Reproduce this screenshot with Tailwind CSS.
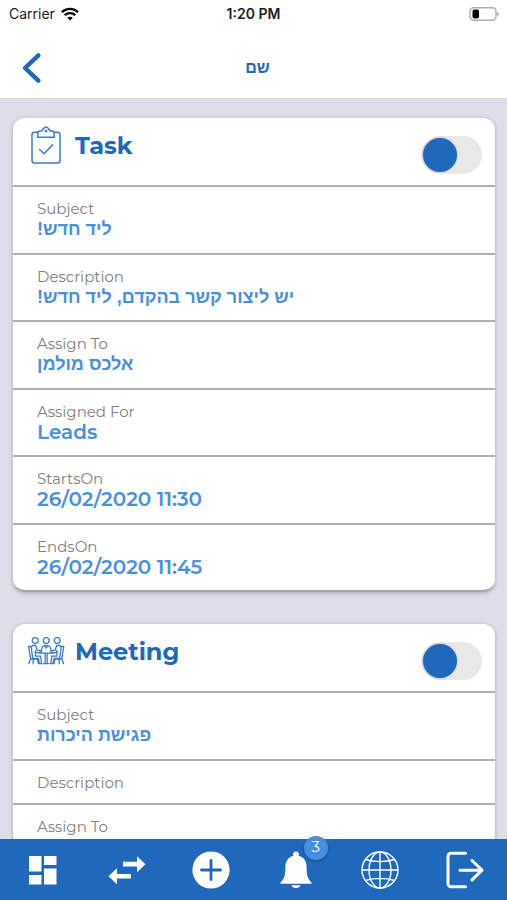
<!DOCTYPE html>
<html lang="en">
<head>
<meta charset="utf-8">
<meta name="viewport" content="width=device-width, initial-scale=1">
<title>שם</title>
<script src="https://cdn.jsdelivr.net/npm/@tailwindcss/browser@4"></script>
</head>
<body class="flex h-screen flex-col overflow-hidden bg-[#dcdfea] font-[Montserrat,Inter,'Open_Sans',sans-serif] text-[#808080]">

<header class="shrink-0 border-b border-[#d5d8e0] bg-white">
  <div class="grid h-7 grid-cols-3 items-center px-2 font-[Inter,sans-serif] text-sm text-[#1c1c1c]">
    <div class="flex items-center gap-1.5 pl-px">
      <span>Carrier</span>
      <svg class="h-[14px] w-[18px]" viewBox="0 0 18 14" fill="none" stroke="#000" stroke-width="2.3" aria-hidden="true">
        <path d="M.9 5.2C5.4.8 12.6.8 17.1 5.2"/><path d="M3.7 8.2c3-2.8 7.6-2.8 10.6 0"/>
        <path d="M9 13.6 6.2 10.8c1.6-1.500 4-1.500 5.600 0z" fill="#000" stroke="none"/>
      </svg>
    </div>
    <span class="text-center font-semibold">1:20 PM</span>
    <svg class="h-[14px] w-[31px] justify-self-end" viewBox="0 0 31 14" aria-hidden="true">
      <rect x="2" y=".8" width="26" height="12.4" rx="3.6" fill="#fff" stroke="#adadad" stroke-width="1.4"/>
      <rect x="4.500" y="2.600" width="6.500" height="8.800" rx="1.800" fill="#000"/>
      <path d="M29.200 4.800c2.200.7 2.200 3.700 0 4.400z" fill="#adadad"/>
    </svg>
  </div>
  <div class="grid h-[70px] grid-cols-[1fr_auto_1fr] items-center pr-3 pb-0.5 pl-5 pt-3">
    <a href="#" aria-label="Back" class="justify-self-start">
      <svg class="h-8 w-6" viewBox="0 0 24 32" fill="none" stroke="#2068bc" stroke-width="4.4" stroke-linecap="round" stroke-linejoin="round"><path d="M18.4 3.4 5 16l13.4 12.6"/></svg>
    </a>
    <h1 class="font-['Liberation_Sans',sans-serif] text-base font-bold text-[#2068bc]">שם</h1>
  </div>
</header>

<main class="flex min-h-0 flex-1 flex-col gap-8 overflow-y-auto pt-[19px] pr-3 pb-4 pl-[13px] [scrollbar-width:none]">
  <section class="shrink-0 rounded-xl border-b-2 border-[#a3a7ab] bg-white shadow-[0_1px_4px_rgba(0,0,0,0.25)]">
    <div class="flex h-[67px] items-start pr-[13px] pl-3">
      <svg class="mt-2 h-[38px] w-[42px] shrink-0" viewBox="0 0 42 38" fill="none" stroke="#3b7bc8" stroke-width="1.5" stroke-linejoin="round" stroke-linecap="round" aria-hidden="true">
        <path d="M12.500 6.300H9.500a2.500 2.500 0 0 0-2.500 2.500V34.500a2.500 2.500 0 0 0 2.500 2.500H32.500a2.500 2.500 0 0 0 2.500-2.500V8.800a2.500 2.500 0 0 0-2.500-2.500H29.500"/>
        <path d="M12.800 11.300V7.300c0-1.500 1-2.300 2.500-2.300h1.400C18 3.800 18.600 1.100 21 1.100S24 3.800 25.300 5h1.400c1.500 0 2.500.8 2.500 2.300v4z"/>
        <circle cx="21" cy="5" r=".7"/><path d="m14.500 23.500 4.500 4.200 8.700-9"/>
      </svg>
      <h2 class="mt-2 ml-2 flex-1 text-2xl leading-10 font-bold text-[#2068bc]"><label for="task">Task</label></h2>
      <input id="task" type="checkbox" role="switch" class="mt-[18px] h-[38px] w-[61px] cursor-pointer appearance-none rounded-full bg-[#e8e8e8] p-0.5 before:block before:size-[34px] before:rounded-full before:bg-[#2068bc] before:shadow-[0_0_2px_rgba(0,0,0,0.35)] checked:before:ml-auto">
    </div>
    <dl class="grid min-h-[405px] auto-rows-fr text-left">
      <div class="border-t-2 border-[#b0b0b0] px-6 pt-3">
        <dt class="text-[15px] leading-5">Subject</dt>
        <dd class="font-['Liberation_Sans',sans-serif] text-lg leading-5 font-bold text-[#4a90dc]"><bdi>ליד חדש!</bdi></dd>
      </div>
      <div class="border-t-2 border-[#b0b0b0] px-6 pt-3">
        <dt class="text-[15px] leading-5">Description</dt>
        <dd class="font-['Liberation_Sans',sans-serif] text-lg leading-5 font-bold text-[#4a90dc]"><bdi>יש ליצור קשר בהקדם, ליד חדש!</bdi></dd>
      </div>
      <div class="border-t-2 border-[#b0b0b0] px-6 pt-3">
        <dt class="text-[15px] leading-5">Assign To</dt>
        <dd class="font-['Liberation_Sans',sans-serif] text-lg leading-5 font-bold text-[#4a90dc]"><bdi>אלכס מולמן</bdi></dd>
      </div>
      <div class="border-t-2 border-[#b0b0b0] px-6 pt-3">
        <dt class="text-[15px] leading-5">Assigned For</dt>
        <dd class="text-xl leading-5 font-semibold text-[#4a90dc]">Leads</dd>
      </div>
      <div class="border-t-2 border-[#b0b0b0] px-6 pt-3">
        <dt class="text-[15px] leading-5">StartsOn</dt>
        <dd class="text-xl leading-5 font-semibold text-[#4a90dc]">26/02/2020 11:30</dd>
      </div>
      <div class="border-t-2 border-[#b0b0b0] px-6 pt-3">
        <dt class="text-[15px] leading-5">EndsOn</dt>
        <dd class="text-xl leading-5 font-semibold text-[#4a90dc]">26/02/2020 11:45</dd>
      </div>
    </dl>
  </section>

  <section class="shrink-0 rounded-xl bg-white shadow-[0_1px_4px_rgba(0,0,0,0.25)]">
    <div class="flex h-[67px] items-start pr-[13px] pl-3">
      <svg class="mt-2 h-[38px] w-[42px] shrink-0" viewBox="0 0 42 38" fill="none" stroke="#3b7bc8" stroke-width="1.3" stroke-linejoin="round" stroke-linecap="round" aria-hidden="true">
        <circle cx="10.200" cy="8.600" r="2.900"/><circle cx="21.200" cy="8.600" r="2.900"/><circle cx="32.200" cy="8.600" r="2.900"/>
        <path d="M7.500 13.500h3.200l1.600 4.700 4 .8v1.800l-5.200-.3-.7-2v5.600h5.200l1 7.400h-2.200l-1-5.200H7.700L6.200 15zM3.600 14.500l2 12-1.800 5.200M3.600 14.500h1.800M5.600 27h6.800l1 4.700M8.200 27v4.700"/>
        <path d="M34.900 13.500h-3.200l-1.600 4.700-4 .8v1.800l5.200-.3.700-2v5.600h-5.200l-1 7.400H28l1-5.200h5.700L36.200 15zM38.800 14.500l-2 12 1.800 5.200M38.800 14.500H37M36.800 27H30l-1 4.700M34.200 27v4.700"/>
        <path d="M16.500 18.400c0-3.300 1.600-5.100 4.700-5.100s4.700 1.800 4.700 5.100M19.300 13.600l1.900 2.400 1.900-2.400M14.500 21.200h13.400M20.200 21.200v10.500M22.200 21.200v10.500M18.300 31.700h5.800"/>
      </svg>
      <h2 class="mt-2 ml-2 flex-1 text-2xl leading-10 font-bold text-[#2068bc]"><label for="meeting">Meeting</label></h2>
      <input id="meeting" type="checkbox" role="switch" class="mt-[18px] h-[38px] w-[61px] cursor-pointer appearance-none rounded-full bg-[#e8e8e8] p-0.5 before:block before:size-[34px] before:rounded-full before:bg-[#2068bc] before:shadow-[0_0_2px_rgba(0,0,0,0.35)] checked:before:ml-auto">
    </div>
    <dl class="text-left">
      <div class="border-t-2 border-[#b0b0b0] px-6 pt-3 pb-[10px]">
        <dt class="text-[15px] leading-5">Subject</dt>
        <dd class="pb-1 font-['Liberation_Sans',sans-serif] text-lg leading-5 font-bold text-[#4a90dc]"><bdi>פגישת היכרות</bdi></dd>
      </div>
      <div class="border-t-2 border-[#b0b0b0] px-6 pt-3 pb-[10px]">
        <dt class="text-[15px] leading-5">Description</dt>
        <dd></dd>
      </div>
      <div class="border-t-2 border-[#b0b0b0] px-6 pt-3 pb-[10px]">
        <dt class="text-[15px] leading-5">Assign To</dt>
        <dd></dd>
      </div>
    </dl>
  </section>
</main>

<nav aria-label="Main" class="grid h-[61px] shrink-0 grid-cols-6 items-center bg-[#2068bc] text-white">
  <a href="#" aria-label="Dashboard" class="justify-self-center">
    <svg class="size-10" viewBox="0 0 40 40" fill="currentColor"><path d="M7 6h12.500v15.500H7zM22 6h12.500v9H22zM7 25h12.500v9.500H7zM22 18.500h12.500v16H22z"/></svg>
  </a>
  <a href="#" aria-label="Transfer" class="justify-self-center">
    <svg class="size-10" viewBox="0 0 40 40" fill="currentColor"><path d="M16 11.800h14V6.200l8.500 8-8.500 8v-5.600H16zM24 24H10v-5.800l-8.500 8 8.500 8v-5.600h14z"/></svg>
  </a>
  <a href="#" aria-label="Add" class="justify-self-center">
    <svg class="size-10" viewBox="0 0 40 40"><circle cx="20" cy="20" r="18.600" fill="#fff"/><path d="M20 10.500v19M10.500 20h19" stroke="#2068bc" stroke-width="2.800" stroke-linecap="round"/></svg>
  </a>
  <a href="#" aria-label="Notifications" class="relative justify-self-center">
    <svg class="size-10" viewBox="0 0 40 40" fill="currentColor"><path d="M20 1.500c1.800 0 3 1.300 3 3v1.600c5 1.300 7.600 5.500 7.600 10.900 0 8 .8 11.500 4.900 15.400v1.400h-31v-1.400C8.600 28.500 9.400 25 9.400 17c0-5.400 2.600-9.600 7.600-10.900V4.500c0-1.700 1.200-3 3-3zM15.500 35.200h9a4.600 3.500 0 0 1-9 0z"/></svg>
    <span class="absolute -top-3.5 -right-3 flex size-6 items-center justify-center rounded-full bg-[#478ee0] text-[15px] shadow-[0_1px_3px_rgba(0,0,0,0.3)]">3</span>
  </a>
  <a href="#" aria-label="Language" class="justify-self-center">
    <svg class="size-10" viewBox="0 0 40 40" fill="none" stroke="currentColor" stroke-width="1.400"><circle cx="20" cy="20" r="18"/><ellipse cx="20" cy="20" rx="11" ry="18"/><path d="M20 2v36M2 20h36M5.500 9.500c8.500 2.800 20.500 2.800 29 0M5.500 30.500c8.500-2.800 20.500-2.800 29 0"/></svg>
  </a>
  <a href="#" aria-label="Log out" class="justify-self-center">
    <svg class="size-10" viewBox="0 0 40 40" fill="none" stroke="currentColor" stroke-width="3" stroke-linecap="round" stroke-linejoin="round"><path d="M20.500 3.200H6a3 3 0 0 0-3 3v27.600a3 3 0 0 0 3 3h14.500M15 20.200h22M27 10.500l10 9.700-10 9.700"/></svg>
  </a>
</nav>
</body>
</html>
